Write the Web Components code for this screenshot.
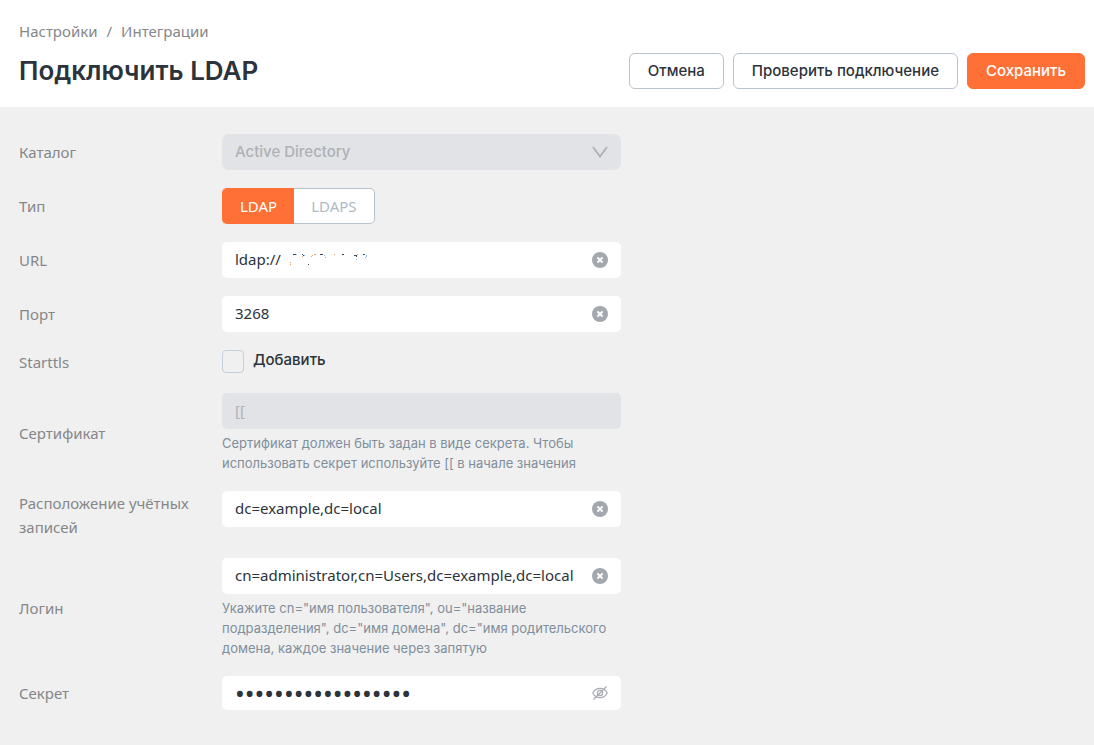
<!DOCTYPE html>
<html lang="ru">
<head>
<meta charset="utf-8">
<meta name="viewport" content="width=device-width, initial-scale=1">
<title>Подключить LDAP</title>
<style>
  html, body { margin: 0; min-height: 100%; background: #f0f0f0; }
  body {
    --accent: #ff7037;
    --ink: #2c333b;
    --muted: #858789;
    --line: #b9c3ce;
    --disabled: #e2e3e7;
    --ui: Inter, "Noto Sans", sans-serif;
    --text: "Noto Sans", "Open Sans", sans-serif;
    font-family: var(--text);
    color: var(--ink);
  }
</style>
</head>
<body>
<ldap-page></ldap-page>

<script>
const FIELD_CSS = `
  * { box-sizing: border-box; }
  :host {
    display: grid;
    grid-template-columns: minmax(0, 175px) minmax(0, 399px);
    column-gap: 28px;
    align-items: start;
  }
  .label {
    align-self: center;
    padding-bottom: 1px;
    font: 400 15px/24px var(--text);
    color: var(--muted);
  }
  .box { position: relative; display: flex; align-items: center; }
  input.text, select {
    appearance: none;
    width: 100%;
    height: 36px;
    margin: 0;
    padding: 0 36px 2px 13px;
    border: 0;
    border-radius: 5px;
    background: #fff;
    color: var(--ink);
    font: 400 15px/20px var(--text);
    opacity: 1;
    outline-color: var(--accent);
  }
  input.text:disabled, select:disabled { background: var(--disabled); color: #aeb1b5; }
  select { padding-bottom: 0; border-radius: 7px; font: 500 15px/20px var(--ui); }
  input.text[type=password] { height: 34px; padding-bottom: 0; font-size: 26px; }
  .end {
    position: absolute;
    right: 12px;
    display: flex;
    width: 18px;
    height: 18px;
    margin: 0;
    padding: 0;
    border: 0;
    background: none;
    align-items: center;
    justify-content: center;
  }
  .hint {
    margin: 0;
    padding-top: 4px;
    font: 400 13px/20px var(--ui);
    color: #7f8e9c;
  }
`;

const ICONS = {
  clear: `<svg width="16" height="16" viewBox="0 0 16 16" aria-hidden="true"><circle cx="8" cy="8" r="8" fill="#a3a8ae"/><path d="M5.4 5.5l5.2 5M10.6 5.5l-5.2 5" stroke="#fff" stroke-width="1.9"/></svg>`,
  chevron: `<svg width="16" height="12" viewBox="0 0 16 12" aria-hidden="true"><path d="M1 1l7 9.5L15 1" fill="none" stroke="#abafb4" stroke-width="1.7"/></svg>`,
  eye: `<svg width="16" height="14" viewBox="0 0 16 14" fill="none" stroke="#a6abb1" stroke-width="1.2" aria-hidden="true"><path d="M.8 7C2.3 4 4.8 2.3 8 2.3S13.7 4 15.2 7C13.7 10 11.2 11.7 8 11.7S2.3 10 .8 7z"/><circle cx="8" cy="7" r="2.6"/><path d="M14.500 .5L1.500 13.500"/></svg>`
};

class TextField extends HTMLElement {
  connectedCallback() {
    const a = n => this.getAttribute(n) || '';
    const end = a('end');
    const names = { clear: 'Очистить', eye: 'Показать секрет' };
    this.attachShadow({ mode: 'open' }).innerHTML = `
      <style>${FIELD_CSS}
        ::slotted(svg) { position: absolute; left: 62px; top: 6px; pointer-events: none; }
      </style>
      <label class="label" for="f">${a('label')}</label>
      <div>
        <div class="box">
          <input class="text" id="f" type="${a('type') || 'text'}" value="${a('value')}" ${this.hasAttribute('disabled') ? 'disabled' : ''}>
          <slot></slot>
          ${end ? `<button class="end" type="button" aria-label="${names[end]}">${ICONS[end]}</button>` : ''}
        </div>
        ${a('hint') ? `<p class="hint">${a('hint')}</p>` : ''}
      </div>`;
    const button = this.shadowRoot.querySelector('button');
    const input = this.shadowRoot.querySelector('input');
    if (button) button.addEventListener('click', () => {
      if (end === 'clear') input.value = '';
      else input.type = input.type === 'password' ? 'text' : 'password';
    });
  }
}
customElements.define('text-field', TextField);

class SelectField extends HTMLElement {
  connectedCallback() {
    this.attachShadow({ mode: 'open' }).innerHTML = `
      <style>${FIELD_CSS}</style>
      <label class="label" for="f">${this.getAttribute('label')}</label>
      <div class="box">
        <select id="f" disabled><option>${this.getAttribute('value')}</option></select>
        <span class="end">${ICONS.chevron}</span>
      </div>`;
  }
}
customElements.define('select-field', SelectField);

class SegmentField extends HTMLElement {
  connectedCallback() {
    const options = this.getAttribute('options').split(',');
    this.attachShadow({ mode: 'open' }).innerHTML = `
      <style>${FIELD_CSS}
        .group { display: flex; }
        .group label {
          position: relative;
          height: 36px;
          padding: 0 17px;
          border: 1px solid var(--line);
          background: #fff;
          color: #b0bac5;
          font: 400 15px/34px var(--text);
        }
        .group label:first-child { border-radius: 5px 0 0 5px; border-right: 0; }
        .group label:last-child { border-radius: 0 5px 5px 0; border-left: 0; }
        .group label:has(:checked) { background: var(--accent); border-color: var(--accent); color: #fff; }
        .group input { position: absolute; inset: 0; margin: 0; opacity: 0; }
      </style>
      <span class="label" id="l">${this.getAttribute('label')}</span>
      <div class="group" role="radiogroup" aria-labelledby="l">
        ${options.map((o, i) => `<label><input type="radio" name="t" ${i ? '' : 'checked'}>${o}</label>`).join('')}
      </div>`;
  }
}
customElements.define('segment-field', SegmentField);

class CheckField extends HTMLElement {
  connectedCallback() {
    this.attachShadow({ mode: 'open' }).innerHTML = `
      <style>${FIELD_CSS}
        .check { display: flex; gap: 9px; height: 24px; font: 500 15px/20px var(--ui); }
        .check input {
          appearance: none;
          width: 22px;
          height: 23px;
          margin: 0;
          border: 1px solid #c6ced7;
          border-radius: 4px;
        }
        .check input:checked { background: var(--accent); border-color: var(--accent); }
      </style>
      <span class="label" id="l">${this.getAttribute('label')}</span>
      <label class="check"><input type="checkbox" aria-describedby="l">${this.getAttribute('text')}</label>`;
  }
}
customElements.define('check-field', CheckField);

class UiButton extends HTMLElement {
  connectedCallback() {
    this.attachShadow({ mode: 'open' }).innerHTML = `
      <style>
        :host { display: block; }
        button {
          box-sizing: border-box;
          height: 36px;
          margin: 0;
          padding: 0 18px;
          border: 1px solid var(--line);
          border-radius: 6px;
          background: #fff;
          color: var(--ink);
          font: 500 15px/20px var(--ui);
          white-space: nowrap;
        }
        :host([primary]) button { background: var(--accent); border-color: var(--accent); color: #fff; }
      </style>
      <button type="button"><slot></slot></button>`;
  }
}
customElements.define('ui-button', UiButton);

class PageHeader extends HTMLElement {
  connectedCallback() {
    this.attachShadow({ mode: 'open' }).innerHTML = `
      <style>
        :host { display: block; padding: 20px 9px 18px 19px; background: #fff; }
        nav { display: flex; gap: 9px; font: 400 15px/22px var(--text); color: var(--muted); }
        a { color: inherit; text-decoration: none; }
        .bar { display: flex; flex-wrap: wrap; justify-content: space-between; gap: 9px; margin-top: 11px; }
        h1 { margin: 0; font: 600 26px/36px var(--ui); }
        .actions { display: flex; flex-wrap: wrap; gap: 9px; }
      </style>
      <nav aria-label="Навигация"><a href="#">Настройки</a><span>/</span><a href="#">Интеграции</a></nav>
      <div class="bar">
        <h1><slot></slot></h1>
        <div class="actions"><slot name="actions"></slot></div>
      </div>`;
  }
}
customElements.define('page-header', PageHeader);

class LdapPage extends HTMLElement {
  connectedCallback() {
    this.attachShadow({ mode: 'open' }).innerHTML = `
      <style>
        :host { display: block; }
        main { display: grid; gap: 18px; padding: 27px 19px 33px; }
      </style>
      <page-header>Подключить LDAP
        <ui-button slot="actions">Отмена</ui-button>
        <ui-button slot="actions">Проверить подключение</ui-button>
        <ui-button slot="actions" primary>Сохранить</ui-button>
      </page-header>
      <main>
        <select-field label="Каталог" value="Active Directory"></select-field>
        <segment-field label="Тип" options="LDAP,LDAPS"></segment-field>
        <text-field label="URL" value="ldap://" end="clear">
          <!-- specks left of the erased host address -->
          <svg width="90" height="24" viewBox="0 0 90 24" aria-hidden="true">
            <g fill="#3b4454">
              <path d="M9 6h3v1H9zM18 6h1v1h-1zM19 7h1v1h-1zM24 16h1v1h-1zM36 6h3v1h-3zM58 6h2v1h-2zM70 7h3v1h-3zM72 8h1v1h-1zM79 6h2v1h-2z"/>
            </g>
            <g fill="#e2a870"><path d="M6 16h1v1H6zM6 14h1v1H6zM18 8h1v1h-1zM28 7h1v1h-1zM30 6h2v1h-2zM50 6h1v1h-1zM27 8h1v1h-1z"/></g>
            <g fill="#86bce6"><path d="M12 6h1v1h-1zM40 7h1v1h-1zM41 9h1v1h-1zM20 7h1v1h-1zM73 6h1v1h-1zM72 11h1v1h-1zM82 7h1v2h-1zM81 9h1v1h-1z"/></g>
            <g fill="#fbe9c4"><path d="M70 13h1v1h-1zM75 15h1v1h-1z"/></g>
          </svg>
        </text-field>
        <text-field label="Порт" value="3268" end="clear"></text-field>
        <check-field label="Starttls" text="Добавить"></check-field>
        <text-field label="Сертификат" value="[[" disabled hint="Сертификат должен быть задан в виде секрета. Чтобы использовать секрет используйте [[ в начале значения"></text-field>
        <text-field label="Расположение учётных записей" value="dc=example,dc=local" end="clear"></text-field>
        <text-field label="Логин" value="cn=administrator,cn=Users,dc=example,dc=local" end="clear" hint="Укажите cn=&amp;quot;имя пользователя&amp;quot;, ou=&amp;quot;название подразделения&amp;quot;, dc=&amp;quot;имя домена&amp;quot;, dc=&amp;quot;имя родительского домена, каждое значение через запятую"></text-field>
        <text-field label="Секрет" type="password" value="secretsecretsecret" end="eye"></text-field>
      </main>`;
  }
}
customElements.define('ldap-page', LdapPage);
</script>
</body>
</html>
